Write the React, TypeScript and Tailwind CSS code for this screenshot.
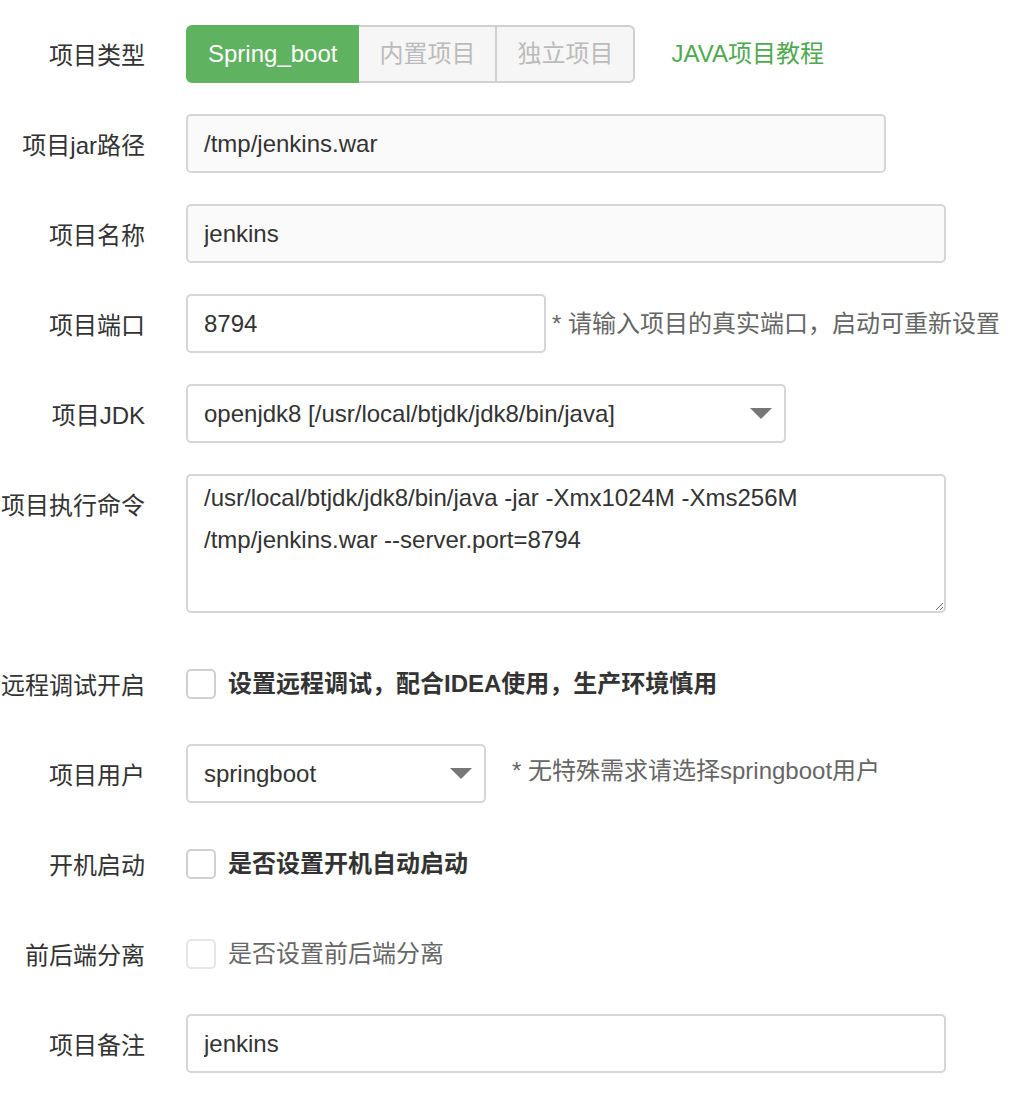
import React from 'react';

const FONT = "font-['Liberation_Sans','Noto_Sans_CJK_SC',sans-serif]";

function Row({ label, children, className = '' }: { label: string; children: React.ReactNode; className?: string }) {
  return (
    <div className={`flex items-start ${className}`}>
      <div className="h-[59px] w-[145px] shrink-0 pt-[2px] text-right leading-[59px] text-[#333]">{label}</div>
      <div className="ml-[41px] flex min-h-[59px] items-center">{children}</div>
    </div>
  );
}

function Caret() {
  return (
    <svg width="22" height="11" viewBox="0 0 22 11">
      <polygon points="0,0 22,0 11,11" fill="#777" />
    </svg>
  );
}

function Checkbox({ muted = false }: { muted?: boolean }) {
  return (
    <span
      className={`inline-block h-[30px] w-[30px] shrink-0 rounded-[5px] border-2 bg-white ${
        muted ? 'border-[#e6e6e6]' : 'border-[#d0d0d0]'
      }`}
    />
  );
}

export default function App() {
  return (
    <div className={`min-h-[1098px] w-[1026px] bg-white pt-[24px] text-[24px] text-[#333] ${FONT}`}>
      {/* 项目类型 */}
      <Row label="项目类型" className="mb-[31px]">
        <div className="flex h-[58px]">
          <button className="rounded-l-[6px] border-2 border-[#5fb25f] bg-[#5fb25f] px-[20px] text-white">
            Spring_boot
          </button>
          <button className="border-2 border-l-0 border-[#d0d0d0] bg-[#f6f6f6] px-[20px] text-[#bbb]">
            内置项目
          </button>
          <button className="rounded-r-[6px] border-2 border-l-0 border-[#d0d0d0] bg-[#f6f6f6] px-[20px] text-[#bbb]">
            独立项目
          </button>
        </div>
        <a className="ml-[36px] text-[#4fa94f]">JAVA项目教程</a>
      </Row>

      <Row label="项目jar路径" className="mb-[31px]">
        <input
          readOnly
          defaultValue="/tmp/jenkins.war"
          className="h-[59px] w-[700px] rounded-[5px] border-2 border-[#d6d6d6] bg-[#fafafa] px-[16px] text-[#333] outline-none"
        />
      </Row>

      <Row label="项目名称" className="mb-[31px]">
        <input
          readOnly
          defaultValue="jenkins"
          className="h-[59px] w-[760px] rounded-[5px] border-2 border-[#d6d6d6] bg-[#fafafa] px-[16px] text-[#333] outline-none"
        />
      </Row>

      <Row label="项目端口" className="mb-[31px]">
        <input
          readOnly
          defaultValue="8794"
          className="h-[59px] w-[360px] rounded-[5px] border-2 border-[#d6d6d6] bg-white px-[16px] text-[#333] outline-none"
        />
        <span className="ml-[6px] whitespace-nowrap text-[#666]">* 请输入项目的真实端口，启动可重新设置</span>
      </Row>

      <Row label="项目JDK" className="mb-[31px]">
        <div className="flex h-[59px] w-[600px] items-center justify-between rounded-[5px] border-2 border-[#d6d6d6] bg-white pl-[16px] pr-[12px]">
          <span>openjdk8 [/usr/local/btjdk/jdk8/bin/java]</span>
          <Caret />
        </div>
      </Row>

      <Row label="项目执行命令" className="mb-[41px]">
        <textarea
          readOnly
          defaultValue="/usr/local/btjdk/jdk8/bin/java -jar -Xmx1024M -Xms256M /tmp/jenkins.war --server.port=8794"
          className="h-[139px] w-[760px] rounded-[5px] border-2 border-[#d6d6d6] bg-white px-[16px] pt-[1px] leading-[42px] text-[#333] outline-none"
        />
      </Row>

      <Row label="远程调试开启" className="mb-[31px]">
        <Checkbox />
        <span className="ml-[12px] font-bold text-[#333]">设置远程调试，配合IDEA使用，生产环境慎用</span>
      </Row>

      <Row label="项目用户" className="mb-[31px]">
        <div className="flex h-[59px] w-[300px] items-center justify-between rounded-[5px] border-2 border-[#d6d6d6] bg-white pl-[16px] pr-[12px]">
          <span>springboot</span>
          <Caret />
        </div>
        <span className="ml-[26px] -mt-[6px] whitespace-nowrap text-[#666]">* 无特殊需求请选择springboot用户</span>
      </Row>

      <Row label="开机启动" className="mb-[31px]">
        <Checkbox />
        <span className="ml-[12px] font-bold text-[#333]">是否设置开机自动启动</span>
      </Row>

      <Row label="前后端分离" className="mb-[31px]">
        <Checkbox muted />
        <span className="ml-[12px] text-[#666]">是否设置前后端分离</span>
      </Row>

      <Row label="项目备注">
        <input
          readOnly
          defaultValue="jenkins"
          className="h-[59px] w-[760px] rounded-[5px] border-2 border-[#d6d6d6] bg-white px-[16px] text-[#333] outline-none"
        />
      </Row>
    </div>
  );
}
